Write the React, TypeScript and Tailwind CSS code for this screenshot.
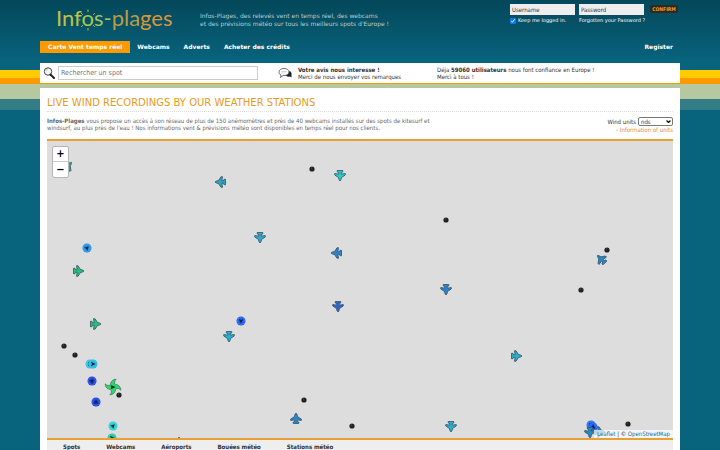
import type { ReactNode } from "react";

type Heading = "up" | "down" | "left" | "right" | "upleft" | "upright";

interface Marker {
  kind: "plane" | "buoy" | "dot" | "cyclone";
  x: number;
  y: number;
  color?: string;
  heading?: Heading;
}

const angles: Record<Heading, number> = {
  up: 0,
  upright: 45,
  right: 90,
  down: 180,
  left: 270,
  upleft: 315,
};

const navLinks = ["Webcams", "Adverts", "Acheter des crédits"];

const tabs = [
  "Spots",
  "Webcams",
  "Aéroports",
  "Bouées météo",
  "Stations météo",
];

// x / y are the marker centres inside the map
const markers: Marker[] = [
  { kind: "plane", x: 21, y: 25, color: "#25c07a", heading: "upright" },
  { kind: "plane", x: 173, y: 41, color: "#2ba3c4", heading: "left" },
  { kind: "dot", x: 265, y: 28 },
  { kind: "plane", x: 293, y: 35, color: "#22d0c8", heading: "down" },
  { kind: "dot", x: 399, y: 79 },
  { kind: "plane", x: 213, y: 97, color: "#2ba9cc", heading: "down" },
  { kind: "plane", x: 289, y: 112, color: "#2b82cc", heading: "left" },
  { kind: "buoy", x: 40, y: 107, color: "#2490e8", heading: "upright" },
  { kind: "plane", x: 32, y: 130, color: "#25c07a", heading: "right" },
  { kind: "dot", x: 560, y: 109 },
  { kind: "plane", x: 554, y: 118, color: "#2489c4", heading: "upleft" },
  { kind: "plane", x: 399, y: 149, color: "#2b82cc", heading: "down" },
  { kind: "dot", x: 534, y: 149 },
  { kind: "plane", x: 291, y: 166, color: "#2b66cc", heading: "down" },
  { kind: "buoy", x: 194, y: 180, color: "#1c5cf0", heading: "down" },
  { kind: "plane", x: 49, y: 183, color: "#25c07a", heading: "right" },
  { kind: "plane", x: 182, y: 196, color: "#22b2cc", heading: "down" },
  { kind: "dot", x: 17, y: 205 },
  { kind: "dot", x: 28, y: 214 },
  { kind: "plane", x: 470, y: 215, color: "#22b2cc", heading: "right" },
  { kind: "buoy", x: 43, y: 223, color: "#35bde0", heading: "right" },
  { kind: "buoy", x: 46, y: 223, color: "#1fb9dc", heading: "right" },
  { kind: "buoy", x: 45, y: 240, color: "#1d42dc", heading: "upright" },
  { kind: "cyclone", x: 66, y: 246 },
  { kind: "dot", x: 72, y: 254 },
  { kind: "buoy", x: 49, y: 261, color: "#1d42dc", heading: "up" },
  { kind: "dot", x: 257, y: 259 },
  { kind: "plane", x: 249, y: 277, color: "#2489c4", heading: "up" },
  { kind: "buoy", x: 66, y: 285, color: "#25d0d0", heading: "upright" },
  { kind: "buoy", x: 65, y: 297, color: "#22c796", heading: "right" },
  { kind: "plane", x: 132, y: 301, color: "#25c07a", heading: "up" },
  { kind: "dot", x: 305, y: 285 },
  { kind: "plane", x: 404, y: 286, color: "#22b2cc", heading: "down" },
  { kind: "dot", x: 581, y: 283 },
  { kind: "plane", x: 553, y: 291, color: "#2489c4", heading: "right" },
  { kind: "buoy", x: 544, y: 284, color: "#1c6cf0", heading: "down" },
  { kind: "buoy", x: 546, y: 286, color: "#1c5ce8", heading: "up" },
  { kind: "plane", x: 543, y: 292, color: "#2489c4", heading: "down" },
];

function Plane({ color, heading = "up" }: Marker) {
  return (
    <svg viewBox="0 0 24 24" className="size-3" aria-hidden="true">
      <path
        transform={`rotate(${angles[heading]} 12 12)`}
        d="M12 2C13.800 4 14.800 6 15 9L22.500 14v3l-7.800-1.300-.4 3 3.200 1.500V23h-11v-2.800l3.200-1.500-.4-3L1.500 17v-3L9 9C9.200 6 10.200 4 12 2Z"
        fill={color}
        stroke="#3b556c"
        strokeWidth="1.700"
        strokeLinejoin="round"
      />
    </svg>
  );
}

function Buoy({ color, heading = "up" }: Marker) {
  return (
    <svg viewBox="0 0 20 20" className="size-[10px]" aria-hidden="true">
      <circle cx="10" cy="10" r="9" fill={color} />
      <circle
        cx="10"
        cy="10"
        r="7"
        fill="none"
        stroke="#ffffff"
        strokeOpacity="0.15"
        strokeWidth="2"
      />
      <path
        transform={`rotate(${angles[heading]} 10 10)`}
        d="m10 5 4.500 9-4.500-2-4.500 2Z"
        fill="#10243c"
      />
    </svg>
  );
}

function Dot() {
  return (
    <svg viewBox="0 0 12 12" className="size-[6px]" aria-hidden="true">
      <circle cx="6" cy="6" r="5.200" fill="#222222" />
      <circle cx="5" cy="4" r="1.500" fill="#484848" />
    </svg>
  );
}

function Cyclone() {
  return (
    <svg viewBox="0 0 32 32" className="size-[17px]" aria-hidden="true">
      <g fill="#2fd873" stroke="#3f6b55" strokeWidth="1.300">
        {[0, 90, 180, 270].map((a) => (
          <path
            key={a}
            transform={`rotate(${a} 16 16)`}
            d="M11 14C11 7 14 2 22 1c-3 3-4 6-2 12Z"
          />
        ))}
      </g>
      <circle cx="16" cy="16" r="6" fill="#2fd873" />
      <path d="m12 12 9 4-9 4Z" fill="#123a24" />
    </svg>
  );
}

function MapMarker(marker: Marker) {
  return (
    <span
      className="absolute -translate-x-1/2 -translate-y-1/2"
      style={{ left: marker.x, top: marker.y }}
    >
      {marker.kind === "plane" && <Plane {...marker} />}
      {marker.kind === "buoy" && <Buoy {...marker} />}
      {marker.kind === "dot" && <Dot />}
      {marker.kind === "cyclone" && <Cyclone />}
    </span>
  );
}

function Logo() {
  return (
    <a
      href="#"
      className="block h-8 w-[143px] pl-4 font-['Lato'] text-[22px] leading-7 whitespace-nowrap text-[#bfc244]"
    >
      Inf
      <span className="relative text-[#a8c94a]">
        o
        <svg
          viewBox="0 0 48 48"
          className="absolute top-1/2 left-1/2 size-6 -translate-x-1/2 -translate-y-[10px]"
          fill="none"
          stroke="#c3c93c"
          strokeWidth="2"
          strokeLinecap="round"
          aria-hidden="true"
        >
          <path d="M24 4v3M24 41v3M6 24h2M40 24h2M11 11l2 2M37 11l-2 2M11 37l2-2M37 37l-2-2" />
        </svg>
      </span>
      <span className="text-[#9cc45c]">s-</span>
      <span className="text-[#b89c46]">pla</span>
      <span className="text-[#d8963a]">ges</span>
    </a>
  );
}

function LoginForm() {
  return (
    <form className="flex items-start gap-1 pt-1 pr-[2px] text-[5px] leading-[7px] text-white">
      <div className="w-[65px]">
        <input
          aria-label="Username"
          defaultValue="Username"
          className="block h-[11px] w-full bg-[#eeeeee] px-[2px] font-['DejaVu_Sans_Condensed','DejaVu_Sans',sans-serif] text-[6px] text-[#333]"
        />
        <label className="mt-[2px] flex items-center gap-[2px] whitespace-nowrap">
          <input type="checkbox" defaultChecked className="size-[6px]" />
          Keep me logged in.
        </label>
      </div>
      <div className="w-[65px]">
        <input
          aria-label="Password"
          defaultValue="Password"
          className="block h-[11px] w-full bg-[#eeeeee] px-[2px] font-['DejaVu_Sans_Condensed','DejaVu_Sans',sans-serif] text-[6px] text-[#333]"
        />
        <a href="#" className="mt-[2px] block whitespace-nowrap">
          Forgotten your Password ?
        </a>
      </div>
      <button
        type="button"
        className="mt-px ml-[2px] h-2 w-7 rounded-[2px] bg-[#2b2b22] text-center font-['DejaVu_Sans_Condensed','DejaVu_Sans',sans-serif] font-bold text-[#f59a2a]"
      >
        CONFIRM
      </button>
    </form>
  );
}

function NavLink({ children }: { children: ReactNode }) {
  return (
    <a href="#" className="px-[7px] leading-3">
      {children}
    </a>
  );
}

function SearchBar() {
  return (
    <div className="flex h-5 items-center bg-white font-['DejaVu_Sans_Condensed','DejaVu_Sans',sans-serif] text-[6px] leading-[7px] text-[#333]">
      <svg
        viewBox="0 0 24 24"
        className="mx-[3px] size-3 shrink-0"
        aria-hidden="true"
      >
        <circle cx="10" cy="9" r="7.500" fill="#f5f5f5" stroke="#444" strokeWidth="2" />
        <path d="M6 8a4.500 4.500 0 0 1 4-4" fill="none" stroke="#999" />
        <path d="m15 15 7 7" stroke="#222" strokeWidth="4" strokeLinecap="round" />
      </svg>
      <input
        aria-label="Rechercher un spot"
        placeholder="Rechercher un spot"
        className="h-[14px] w-[200px] border border-[#cccccc] px-[2px] text-[7px] placeholder:text-[#777]"
      />
      <svg
        viewBox="0 0 28 24"
        className="ml-5 h-3 w-[14px] shrink-0"
        aria-hidden="true"
      >
        <path d="M13 15c5 5 9 5 11 4l3 2v-9l-3-4Z" fill="#222" />
        <path
          d="M12 3c6 0 10 3 10 7s-4 7-10 7l-2 0-5 4 1-5c-3-1-4-4-4-6 0-4 4-7 10-7Z"
          fill="#fff"
          stroke="#444"
          strokeWidth="1.500"
        />
        <path d="M7 9h10M7 12h7" stroke="#aaa" />
      </svg>
      <p className="ml-[6px] w-[139px] whitespace-nowrap">
        <b>Votre avis nous interesse !</b>
        <br />
        Merci de nous envoyer vos remarques
      </p>
      <p className="whitespace-nowrap">
        Déja <b>59060 utilisateurs</b> nous font confiance en Europe !
        <br />
        Merci à tous !
      </p>
    </div>
  );
}

function UnitSelect() {
  return (
    <label className="flex items-center gap-[2px]">
      Wind units
      <span className="relative">
        <select className="block h-[9px] w-[35px] appearance-none rounded-[2px] border border-[#777] bg-white pl-[2px] text-[6px] leading-none">
          <option>nds</option>
          <option>km/h</option>
          <option>m/s</option>
        </select>
        <svg
          viewBox="0 0 10 6"
          className="pointer-events-none absolute top-[3px] right-[2px] h-[3px] w-[5px]"
          fill="none"
          stroke="#111"
          strokeWidth="2.500"
          aria-hidden="true"
        >
          <path d="m1 1 4 4 4-4" />
        </svg>
      </span>
    </label>
  );
}

function WindMap() {
  return (
    <div className="relative h-[301px] overflow-hidden border-y-2 border-[#e8a030] bg-[#dddddd]">
      {markers.map((marker, index) => (
        <MapMarker key={index} {...marker} />
      ))}
      <div className="absolute top-[5px] left-[5px] flex w-[17px] flex-col rounded-[2px] border border-[#b5b5b5] bg-white text-[11px] font-bold text-black">
        <button
          type="button"
          aria-label="Zoom in"
          className="h-[15px] border-b border-[#cccccc] leading-[14px]"
        >
          +
        </button>
        <button
          type="button"
          aria-label="Zoom out"
          className="h-[15px] leading-[14px]"
        >
          −
        </button>
      </div>
      <div className="absolute right-0 bottom-0 bg-white/70 px-[3px] text-[6px] leading-2 text-[#333]">
        <a href="#" className="text-[#0078a8]">
          Leaflet
        </a>{" "}
        | ©{" "}
        <a href="#" className="text-[#0078a8]">
          OpenStreetMap
        </a>
      </div>
    </div>
  );
}

export default function App() {
  return (
    <div className="flex min-h-screen flex-col bg-[#08637c] bg-[linear-gradient(#04475a_0,#08637c_60px,#08637c_70px,#ffcc00_70px,#ffcc00_78px,#ff9900_78px,#ff9900_84px,#b5c8a0_84px,#b5c8a0_99px,#357d86_99px,#357d86_110px,#08637c_110px)] font-['DejaVu_Sans',sans-serif]">
      <div className="mx-auto flex w-full max-w-[640px] flex-1 flex-col">
        <header className="pb-[10px]">
          <div className="flex h-[41px] items-start">
            <div className="pt-1">
              <Logo />
            </div>
            <p className="flex-1 pt-3 pl-[17px] text-[6px] leading-[8px] text-[#b5d0d4]">
              Infos-Plages, des relevés vent en temps réel, des webcams
              <br />
              et des prévisions météo sur tous les meilleurs spots d'Europe !
            </p>
            <LoginForm />
          </div>
          <nav className="flex items-center text-[6px] font-bold text-white">
            <a href="#" className="bg-[#ff9900] px-2 leading-3">
              Carte Vent temps réel
            </a>
            {navLinks.map((label) => (
              <NavLink key={label}>{label}</NavLink>
            ))}
            <span className="flex-1" />
            <NavLink>Register</NavLink>
          </nav>
        </header>

        <SearchBar />

        <main className="mt-[5px] flex flex-1 flex-col bg-white px-[7px] pt-[9px] font-['DejaVu_Sans_Condensed','DejaVu_Sans',sans-serif]">
          <h1 className="border-b border-dotted border-[#dddddd] pb-[2px] font-['DejaVu_Sans',sans-serif] text-[10px] leading-3 text-[#e89a1c]">
            LIVE WIND RECORDINGS BY OUR WEATHER STATIONS
          </h1>
          <div className="flex h-[27px] items-start justify-between pt-[5px] text-[6px] leading-[7px] text-[#666]">
            <p className="whitespace-nowrap">
              <b>Infos-Plages</b> vous propose un accès à son réseau de plus de
              150 anémomètres et près de 40 webcams installés sur des spots de
              kitesurf et
              <br />
              windsurf, au plus près de l'eau ! Nos informations vent &amp;
              prévisions météo sont disponibles en temps réel pour nos clients.
            </p>
            <div className="text-right text-[#333]">
              <UnitSelect />
              <a href="#" className="block text-[#e08a3c]">
                › Information of units
              </a>
            </div>
          </div>
          <WindMap />
          <ul className="flex flex-1 gap-[26px] bg-[#eeeeee] px-4 pt-[3px] text-[6px] leading-[7px] font-bold text-[#333]">
            {tabs.map((tab) => (
              <li key={tab}>
                <a href="#">{tab}</a>
              </li>
            ))}
          </ul>
        </main>
      </div>
    </div>
  );
}
